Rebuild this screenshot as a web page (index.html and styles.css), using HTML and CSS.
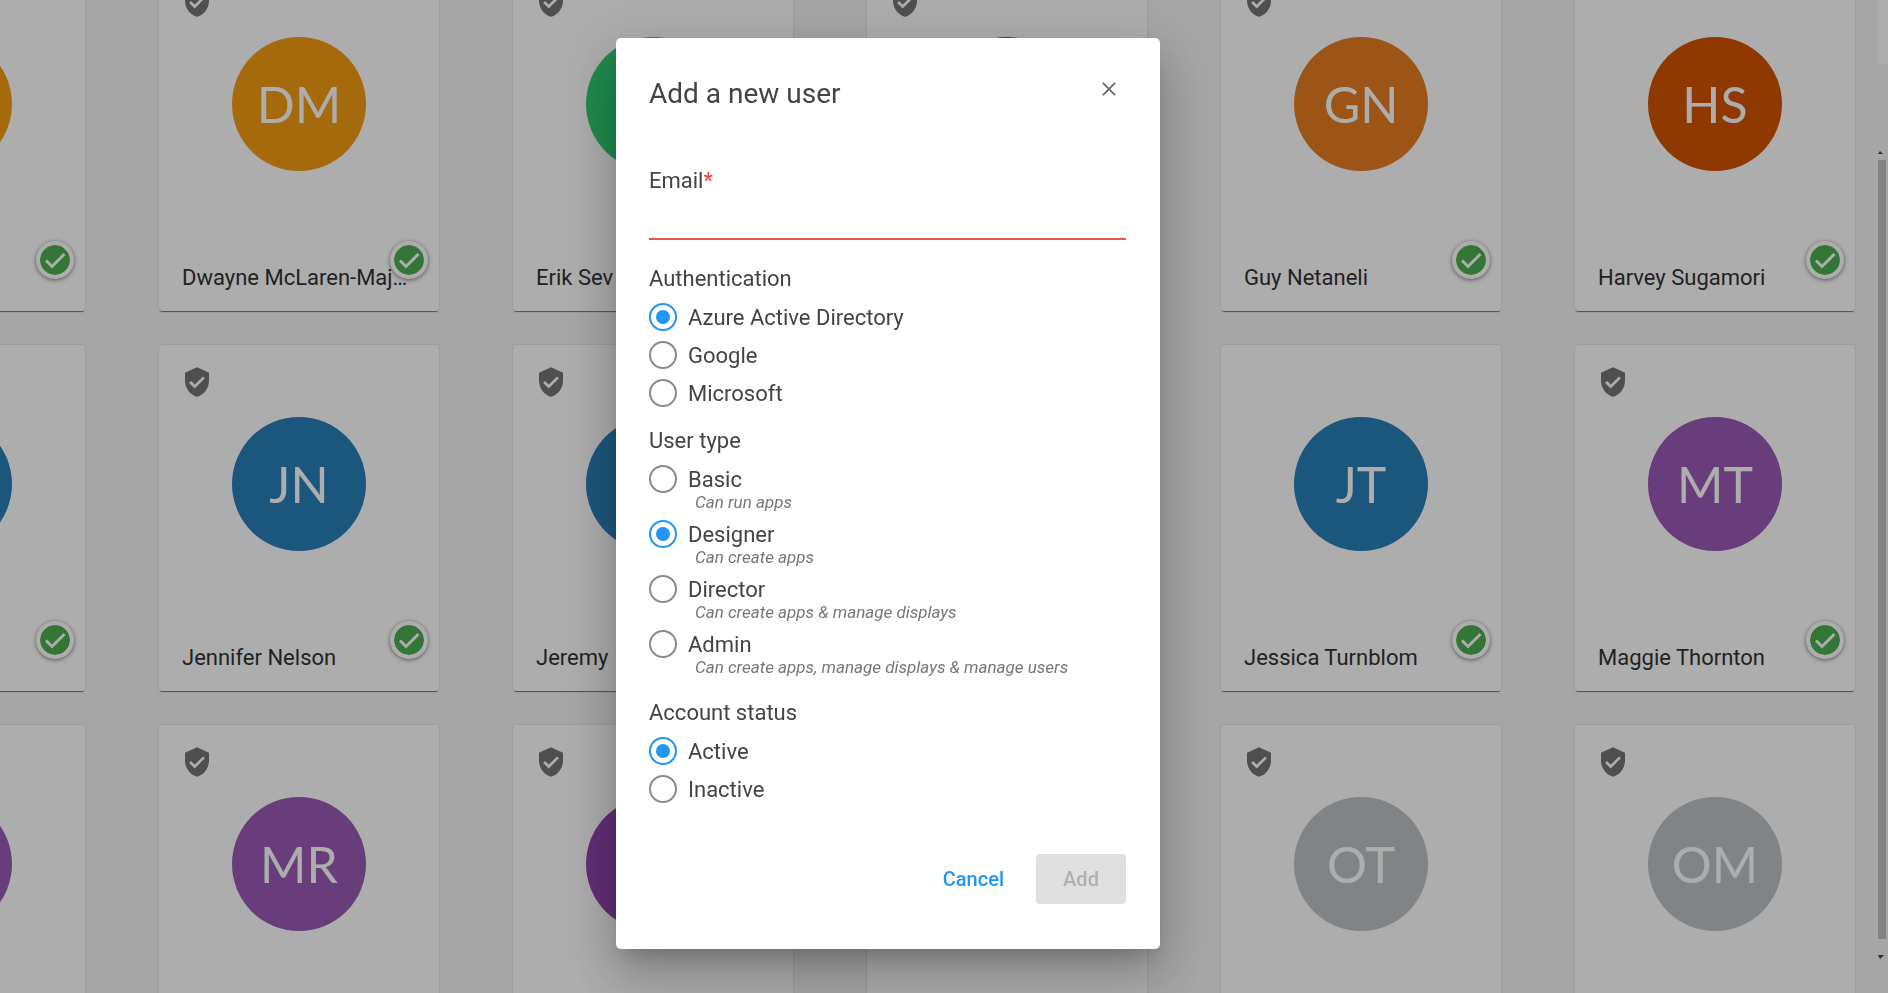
FILE: index.html
```html
<!DOCTYPE html>
<html lang="en">
<head>
<meta charset="utf-8">
<title>Users</title>
<link rel="stylesheet" href="styles.css">
</head>
<body>
<svg class="sprite" aria-hidden="true">
  <symbol id="shield" viewBox="0 0 24 24">
    <path d="M12 1 3 5v6c0 5.550 3.840 10.740 9 12 5.160-1.260 9-6.450 9-12V5z"/>
    <path d="M6.800 12 10.300 15.400 17.200 8.500" fill="none" stroke="#fff" stroke-width="2"/>
  </symbol>
  <symbol id="check" viewBox="0 0 30 30">
    <circle cx="15" cy="15" r="15"/>
    <path d="M6 15.500 12 21.500 24.500 9" fill="none" stroke="#fff" stroke-width="3"/>
  </symbol>
</svg>
<div class="page">
  <main class="users">
    <article class="card"><div class="avatar amber"></div><svg class="status"><use href="#check"/></svg></article>
    <article class="card"><svg class="shield"><use href="#shield"/></svg><div class="avatar amber">DM</div><p class="name">Dwayne McLaren-Majors</p><svg class="status"><use href="#check"/></svg></article>
    <article class="card"><svg class="shield"><use href="#shield"/></svg><div class="avatar green"></div><p class="name">Erik Sev</p></article>
    <article class="card"><svg class="shield"><use href="#shield"/></svg><div class="avatar red"></div></article>
    <article class="card"><svg class="shield"><use href="#shield"/></svg><div class="avatar orange">GN</div><p class="name">Guy Netaneli</p><svg class="status"><use href="#check"/></svg></article>
    <article class="card"><div class="avatar rust">HS</div><p class="name">Harvey Sugamori</p><svg class="status"><use href="#check"/></svg></article>

    <article class="card"><div class="avatar blue"></div><svg class="status"><use href="#check"/></svg></article>
    <article class="card"><svg class="shield"><use href="#shield"/></svg><div class="avatar blue">JN</div><p class="name">Jennifer Nelson</p><svg class="status"><use href="#check"/></svg></article>
    <article class="card"><svg class="shield"><use href="#shield"/></svg><div class="avatar blue"></div><p class="name">Jeremy</p></article>
    <article class="card"></article>
    <article class="card"><div class="avatar blue">JT</div><p class="name">Jessica Turnblom</p><svg class="status"><use href="#check"/></svg></article>
    <article class="card"><svg class="shield"><use href="#shield"/></svg><div class="avatar purple">MT</div><p class="name">Maggie Thornton</p><svg class="status"><use href="#check"/></svg></article>

    <article class="card"><div class="avatar purple"></div></article>
    <article class="card"><svg class="shield"><use href="#shield"/></svg><div class="avatar purple">MR</div></article>
    <article class="card"><svg class="shield"><use href="#shield"/></svg><div class="avatar violet"></div></article>
    <article class="card"></article>
    <article class="card"><svg class="shield"><use href="#shield"/></svg><div class="avatar gray">OT</div></article>
    <article class="card"><svg class="shield"><use href="#shield"/></svg><div class="avatar gray">OM</div></article>
  </main>
  <aside class="scrollbar" aria-hidden="true">
    <div class="track-head"></div>
    <div class="track-gap"></div>
    <svg class="arrow" viewBox="0 0 10 16"><path d="M0 10h5L2 7z"/></svg>
    <div class="thumb"></div>
    <svg class="arrow-down" viewBox="0 0 10 16"><path d="M0 6h6L2 10z"/></svg>
  </aside>
</div>

<div class="backdrop">
  <form class="dialog" role="dialog" aria-labelledby="title">
    <header class="head">
      <h1 id="title">Add a new user</h1>
      <button type="button" class="close" aria-label="Close"><svg viewBox="0 0 16 16"><path d="M1 1 15 15M15 1 1 15"/></svg></button>
    </header>
    <div class="field">
      <label for="email">Email<span class="required">*</span></label>
      <input id="email" type="email">
    </div>
    <fieldset>
      <legend>Authentication</legend>
      <label class="option"><input type="radio" name="auth" checked>Azure Active Directory</label>
      <label class="option"><input type="radio" name="auth">Google</label>
      <label class="option"><input type="radio" name="auth">Microsoft</label>
    </fieldset>
    <fieldset class="types">
      <legend>User type</legend>
      <label class="option"><input type="radio" name="type">Basic</label>
      <p class="hint">Can run apps</p>
      <label class="option"><input type="radio" name="type" checked>Designer</label>
      <p class="hint">Can create apps</p>
      <label class="option"><input type="radio" name="type">Director</label>
      <p class="hint">Can create apps &amp; manage displays</p>
      <label class="option"><input type="radio" name="type">Admin</label>
      <p class="hint">Can create apps, manage displays &amp; manage users</p>
    </fieldset>
    <fieldset>
      <legend>Account status</legend>
      <label class="option"><input type="radio" name="status" checked>Active</label>
      <label class="option"><input type="radio" name="status">Inactive</label>
    </fieldset>
    <footer class="actions">
      <button type="button" class="cancel">Cancel</button>
      <button type="submit" class="add" disabled>Add</button>
    </footer>
  </form>
</div>
</body>
</html>
```

FILE: styles.css
```css
* { box-sizing: border-box; }
body { margin: 0; font-family: Roboto, sans-serif; font-size: 22px; color: #444; }
h1, p, fieldset { margin: 0; padding: 0; border: 0; }
button { font: inherit; border: 0; background: none; cursor: pointer; }
.sprite { position: absolute; width: 0; height: 0; }

.page { display: flex; height: 100vh; overflow: hidden; background: #f5f5f5; }
.users {
  flex: 1; min-width: 0; overflow: hidden;
  display: grid; grid-template-columns: repeat(6, 280px); grid-auto-rows: 346px;
  gap: 34px 74px; justify-content: end; align-content: start;
  margin-top: -35px; padding-right: 23px;
}
.card {
  position: relative; display: flex; flex-direction: column; align-items: center; justify-content: space-between;
  padding: 72px 23px 19px; background: #fff; border-radius: 3px;
  box-shadow: 0 2px 1px -1px rgba(0, 0, 0, .5), 0 0 2px rgba(0, 0, 0, .2);
}
.shield { position: absolute; top: 21px; left: 20px; width: 36px; height: 32px; fill: #757575; }
.avatar {
  display: flex; align-items: center; justify-content: center; width: 134px; height: 134px;
  border-radius: 50%; color: #fff; font-family: Lato, sans-serif; font-size: 50px;
}
.amber { background: #f39c12; }
.green { background: #2ecc71; }
.red { background: #c0392b; }
.orange { background: #e67e22; }
.rust { background: #d35400; }
.blue { background: #2980b9; }
.purple { background: #9b59b6; }
.violet { background: #8e44ad; }
.gray { background: #bdc3c7; }
.name { align-self: stretch; line-height: 28px; color: #333; white-space: nowrap; overflow: hidden; text-overflow: ellipsis; }
.status {
  position: absolute; right: 11px; bottom: 32px; width: 38px; height: 38px; padding: 4px;
  border-radius: 50%; background: #fff; fill: #4caf50; box-shadow: 0 1px 4px rgba(0, 0, 0, .5);
}

.scrollbar { width: 10px; display: flex; flex-direction: column; background: #f5f5f5; }
.track-head { height: 64px; background: #fff; }
.track-gap { height: 80px; }
.arrow, .arrow-down { width: 10px; height: 16px; fill: #444; }
.thumb { flex: 1; width: 8px; background: #c1c1c1; }
.arrow-down { margin: 10px 0 28px; }

.backdrop {
  position: fixed; inset: 0; display: flex; align-items: flex-start; justify-content: center;
  padding: 38px 112px 0 0; background: rgba(0, 0, 0, .32);
}
.dialog {
  width: 544px; padding: 37px 34px 45px 33px; background: #fff; border-radius: 5px;
  box-shadow: 0 14px 20px -9px rgba(0, 0, 0, .2), 0 30px 48px 4px rgba(0, 0, 0, .14), 0 12px 58px 10px rgba(0, 0, 0, .12);
}
.head { display: flex; justify-content: space-between; align-items: flex-start; }
h1 { font-size: 28px; line-height: 38px; font-weight: 400; }
.close { display: flex; padding: 7px 10px; }
.close svg { width: 14px; height: 14px; fill: none; stroke: #666; stroke-width: 2; }
.field { display: flex; flex-direction: column; margin: 53px 0 24px; }
.field label, legend { line-height: 30px; }
.required { color: #f44336; }
.field input { height: 44px; padding: 0; border: 0; border-bottom: 2px solid #ef5350; font: inherit; outline: 0; }
legend { padding: 0; margin-bottom: 4px; }
fieldset + fieldset { margin-top: 14px; }
.option { display: flex; align-items: center; gap: 11px; height: 38px; }
.option input {
  appearance: none; display: grid; place-items: center; width: 28px; height: 28px; margin: 0;
  border: 2px solid #8a8a8a; border-radius: 50%;
}
.option input:checked { border-color: #2196f3; }
.option input:checked::before { content: ""; width: 14px; height: 14px; border-radius: 50%; background: #2196f3; }
.types { padding-bottom: 4px; }
.hint { margin: -5px 0 4px; padding-left: 46px; font-size: 17px; line-height: 18px; font-style: italic; color: #777; }
.actions { display: flex; justify-content: flex-end; gap: 14px; margin-top: 46px; font-size: 20px; font-weight: 500; }
.cancel { padding: 0 18px; color: #2196f3; }
.add { width: 90px; height: 50px; background: #e0e0e0; border-radius: 4px; color: #b0b0b0; }
```
